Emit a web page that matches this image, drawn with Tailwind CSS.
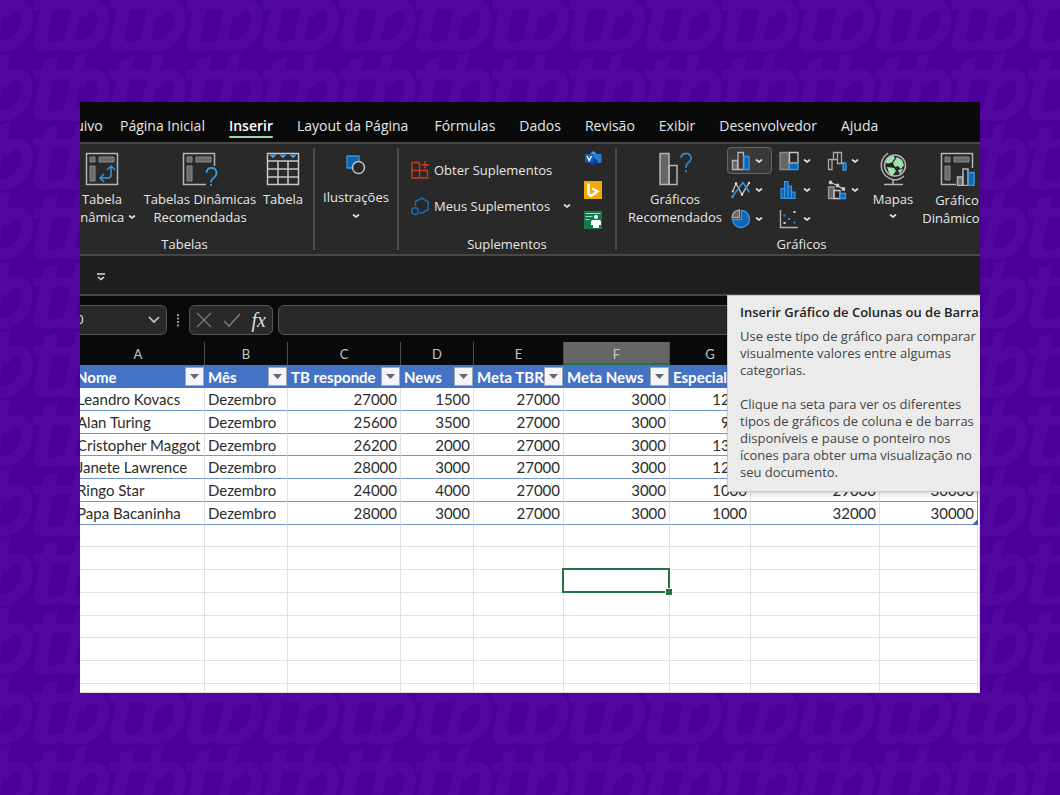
<!DOCTYPE html>
<html lang="pt-BR">
<head>
<meta charset="utf-8">
<title>Planilha</title>
<script src="https://cdn.jsdelivr.net/npm/@tailwindcss/browser@4"></script>
</head>
<body class="relative min-h-screen bg-[#4b009c] font-['Open_Sans',sans-serif]">
<!-- brand texture -->
<svg class="absolute inset-0 size-full" aria-hidden="true">
  <defs>
    <pattern id="brand" x="33" y="51.8" width="76.55" height="69.25" patternUnits="userSpaceOnUse">
      <g fill="none" stroke="#52089e" stroke-width="11.5">
        <path d="M0 22.500H42" stroke-width="9.500"/>
        <path d="M11 8.500L25 4.500L15 52Q14 60 19 60L36 57L32 67L12 69Q-1 69 0.500 58Z" fill="#52089e" stroke="none"/>
        <path d="M43 4L54.500 0.500L41 60L30 62Z" fill="#52089e" stroke="none"/>
        <path d="M46 33C50 26 55 22.500 60 22.500C68 22.500 70.500 29 70.500 36C70.500 50 60 63.500 46 63.500L30 62"/>
      </g>
    </pattern>
  </defs>
  <rect width="100%" height="100%" fill="url(#brand)"/>
</svg>

<main class="relative px-20 pt-[102px] pb-[102px]">
<div class="relative overflow-hidden bg-[#0a0a0a] text-[#e6e6e6]">

  <!-- ribbon tabs -->
  <nav class="flex h-10 items-center gap-6 border-0 text-sm whitespace-nowrap pt-2">
    <a href="#" class="-ml-7 w-[49px] text-right">Arquivo</a>
    <a href="#" class="-ml-[5px]">Página Inicial</a>
    <a href="#" class="relative font-semibold text-white">Inserir<span class="absolute inset-x-0 -bottom-[2px] h-[2px] rounded bg-[#9fd8b8]"></span></a>
    <a href="#" class="mr-[2px]">Layout da Página</a>
    <a href="#">Fórmulas</a>
    <a href="#">Dados</a>
    <a href="#">Revisão</a>
    <a href="#">Exibir</a>
    <a href="#">Desenvolvedor</a>
    <a href="#">Ajuda</a>
  </nav>

  <!-- ribbon -->
  <div class="flex h-[114px] overflow-hidden border-y-2 border-[#474747] bg-[#292929] py-1 text-[13px] leading-[18px] whitespace-nowrap">
    <section class="-ml-6 flex w-[259px] shrink-0 flex-col justify-between border-r-2 border-[#4d4d4d]">
      <div class="flex items-start pt-1 pl-[8px]">
        <button class="flex w-[76px] flex-col items-center">
          <svg class="mb-1 size-[34px]" viewBox="0 0 34 34" fill="none" stroke="#b5b5b5" stroke-width="1.500"><path d="M1.500 1.500h31v31h-31z"/><path d="M5 5h5v5H5zM14 5h15v5H14zM5 14h5v15H5z" fill="#6b6b6b" stroke="#8a8a8a" stroke-width="1"/><path d="M26 15v8q0 3-3 3h-8m4-4l-4 4 4 4M22 18l4-4 4 4" stroke="#3a96dd"/></svg>
          <span>Tabela</span>
          <span class="flex items-center gap-1">Dinâmica<svg class="h-1 w-2" viewBox="0 0 8 4" fill="none" stroke="#ddd" stroke-width="1.700"><path d="M1 .5L4 3 7 .5"/></svg></span>
        </button>
        <button class="flex w-[120px] flex-col items-center">
          <svg class="mb-1 h-[34px] w-[36px]" viewBox="0 0 36 34" fill="none" stroke="#b5b5b5" stroke-width="1.500"><path d="M32.500 14V1.500h-31v31H24"/><path d="M5 5h5v5H5zM14 5h15v5H14zM5 14h5v15H5z" fill="#6b6b6b" stroke="#8a8a8a" stroke-width="1"/><path d="M24.500 21q0-5 5-5 5 0 5 5 0 3-3 5-2.500 1.500-2.500 4.500M29 32v2" stroke="#3a96dd" stroke-width="1.800"/></svg>
          <span>Tabelas Dinâmicas</span><span>Recomendadas</span>
        </button>
        <button class="flex w-[46px] flex-col items-center">
          <svg class="mb-1 size-[34px]" viewBox="0 0 34 34" fill="none" stroke="#c8c8c8" stroke-width="1.500"><path d="M1.500 1.500h31v31h-31zM1.500 9h31M1.500 17h31M1.500 25h31M12 9v23.500M22 9v23.500"/><path d="M4 3h6l-3 3zM14 3h6l-3 3zM24 3h6l-3 3z" fill="#3a96dd" stroke="#3a96dd" stroke-width="1"/></svg>
          <span>Tabela</span>
        </button>
      </div>
      <h2 class="-mb-[3px] text-center">Tabelas</h2>
    </section>
    <section class="w-[84px] shrink-0 border-r-2 border-[#4d4d4d]">
      <button class="flex w-full flex-col items-center pt-1">
        <svg class="mb-2 h-7 w-6" viewBox="0 0 24 28" fill="none"><path d="M3 4h12v12H3z" fill="#0f64b4" stroke="#3a96dd" stroke-width="1.300"/><circle cx="14.500" cy="15.500" r="6" fill="#292929" stroke="#c0c0c0" stroke-width="1.500"/></svg>
        <span>Ilustrações</span>
        <svg class="mt-2 h-1 w-2" viewBox="0 0 8 4" fill="none" stroke="#ddd" stroke-width="1.700"><path d="M1 .5L4 3 7 .5"/></svg>
      </button>
    </section>
    <section class="flex w-[218px] shrink-0 flex-col justify-between border-r-2 border-[#4d4d4d]">
      <div class="flex gap-[13px] pl-3">
        <div class="flex w-[160px] flex-col gap-[18px] pt-[13px]">
          <button class="flex items-center gap-[5px]">
            <svg class="size-[18px]" viewBox="0 0 18 18" fill="none" stroke="#c43e1c" stroke-width="1.400"><path d="M8.500 1.500H1V17h15.500V9.500H1M8.500 1.500V17M14 0v7.500M10.500 3.700H18"/></svg>Obter Suplementos</button>
          <button class="flex items-center gap-[5px]">
            <svg class="size-[18px]" viewBox="0 0 18 18" fill="none" stroke="#1b6db8" stroke-width="1.500"><circle cx="4" cy="14" r="3.300"/><path d="M4.500 9V4.500L11 1l6.200 3.800v7.500L11 16H8.500"/></svg>Meus Suplementos
            <svg class="ml-auto h-1 w-2" viewBox="0 0 8 4" fill="none" stroke="#ddd" stroke-width="1.700"><path d="M1 .5L4 3 7 .5"/></svg></button>
        </div>
        <div class="flex flex-col gap-3 pt-[3px]">
          <button aria-label="Visio"><svg class="block size-[18px]" viewBox="0 0 18 18"><path d="M9.500 0l4.500 4-4.500 4L5 4z" fill="#41a5ee"/><path d="M9 3h8.500v9H9z" fill="#2b7cd3"/><path d="M9 6l5.500 4.500L9 15l-5-4z" fill="#103f91"/><path d="M1 3h8.500v8.500H1z" fill="#185abd"/><path d="M3 5l2.200 4.500L7.500 5" fill="none" stroke="#fff" stroke-width="1.300"/></svg></button>
          <button aria-label="Bing Maps"><svg class="block size-[18px]" viewBox="0 0 18 18"><path d="M0 0h18v18H0z" fill="#f2a900"/><path d="M4.500 2.500v10.500l2.500 2 6.500-4.500L8 7.500" fill="none" stroke="#fff" stroke-width="2.500"/></svg></button>
          <button aria-label="People Graph"><svg class="block size-[18px]" viewBox="0 0 18 18"><path d="M0 0h18v18H0z" fill="#107c4a"/><path d="M1.500 2.500h15M1.500 5.500h7M1.500 8.500h4" stroke="#9fd8b8" stroke-width="1.200"/><circle cx="12" cy="6" r="2" fill="#fff"/><path d="M7 11q0-2 2-2h6q2 0 2 2v3h-2v3H9v-3H7z" fill="#fff"/></svg></button>
        </div>
      </div>
      <h2 class="-mb-[3px] text-center">Suplementos</h2>
    </section>
    <section class="flex w-[369px] shrink-0 flex-col justify-between">
      <div class="flex items-start">
        <button class="flex w-[111px] shrink-0 flex-col items-center pt-1 pl-[5px]">
          <svg class="mb-1 h-[34px] w-[36px]" viewBox="0 0 36 34" fill="none" stroke="#b5b5b5" stroke-width="1.500"><path d="M3 1.500h9v31H3z" fill="#666"/><path d="M12 13.500h8v19h-8z"/><path d="M24 6q.5-4.500 5-4.500T34 6q0 3-3 5-2 1.500-2 5M29 18v2.500" stroke="#2f82c4" stroke-width="1.800"/></svg>
          <span>Gráficos</span><span>Recomendados</span>
        </button>
        <div class="grid shrink-0 grid-cols-[48px_48px_40px] gap-y-[3px]">
          <button aria-label="Colunas" class="-mt-[1px] -ml-px flex h-[27px] w-[45px] items-center gap-1 rounded border border-[#666] bg-[#3a3a3a] pl-[3px]"><svg class="size-5" viewBox="0 0 20 20" fill="none" stroke="#b5b5b5" stroke-width="1.300"><path d="M1.500 9.500h5v9h-5z" fill="#666"/><path d="M7 1.500h5.500v17H7z"/><path d="M13 5.500h5v13h-5z" fill="#0f64b4" stroke="#3a96dd"/></svg><svg class="h-1 w-2" viewBox="0 0 8 4" fill="none" stroke="#ddd" stroke-width="1.700"><path d="M1 .5L4 3 7 .5"/></svg></button>
          <button aria-label="Hierarquia" class="flex h-[26px] items-center gap-1 pl-[3px]"><svg class="size-5" viewBox="0 0 20 20" stroke-width="1.300"><path d="M1 1.500h9v17H1z" fill="#666" stroke="#8a8a8a"/><path d="M10.500 1.500H19V12h-8.500z" fill="none" stroke="#c8c8c8"/><path d="M10.500 12.500H19v6h-8.500z" fill="#0f64b4" stroke="#3a96dd"/></svg><svg class="h-1 w-2" viewBox="0 0 8 4" fill="none" stroke="#ddd" stroke-width="1.700"><path d="M1 .5L4 3 7 .5"/></svg></button>
          <button aria-label="Cascata" class="flex h-[26px] items-center gap-1 pl-[3px]"><svg class="size-5" viewBox="0 0 20 20" fill="none" stroke="#a8a8a8" stroke-width="1.300"><path d="M1.500 19V8.500h3.500V18.500h-3.500M5 8.500h1.500v-7h4v7h-4M10.500 1.500h4v11h-4z"/><path d="M16 12h3v7h-3z" fill="#0f64b4" stroke="#3a96dd"/><path d="M14.500 12h2"/></svg><svg class="h-1 w-2" viewBox="0 0 8 4" fill="none" stroke="#ddd" stroke-width="1.700"><path d="M1 .5L4 3 7 .5"/></svg></button>
          <button aria-label="Linhas" class="flex h-[26px] items-center gap-1 pl-[3px]"><svg class="size-5" viewBox="0 0 20 20" fill="none" stroke-width="1.500"><path d="M1.500 12L5 3.500 11 14.500 18 3" stroke="#b5b5b5"/><path d="M1 17L12 2.500l6.500 10" stroke="#3a96dd"/><g fill="#ddd"><circle cx="5" cy="3.500" r="1.200"/><circle cx="11" cy="14.500" r="1.200"/><circle cx="18" cy="3" r="1.200"/><circle cx="1.800" cy="11.500" r="1"/></g><circle cx="1.500" cy="16.800" r="1.300" fill="#3a96dd"/></svg><svg class="h-1 w-2" viewBox="0 0 8 4" fill="none" stroke="#ddd" stroke-width="1.700"><path d="M1 .5L4 3 7 .5"/></svg></button>
          <button aria-label="Estatística" class="flex h-[26px] items-center gap-1 pl-[3px]"><svg class="size-5" viewBox="0 0 20 20" fill="#0f64b4" stroke="#3a96dd" stroke-width="1.200"><path d="M2 8.500h3.500v10H2zM5.500 1.500H9v17H5.500zM9 6h3.500v12.500H9zM12.500 12H16v6.500h-3.500z"/></svg><svg class="h-1 w-2" viewBox="0 0 8 4" fill="none" stroke="#ddd" stroke-width="1.700"><path d="M1 .5L4 3 7 .5"/></svg></button>
          <button aria-label="Combinação" class="flex h-[26px] items-center gap-1 pl-[3px]"><svg class="size-5" viewBox="0 0 20 20" fill="none" stroke="#c8c8c8" stroke-width="1.300"><path d="M1.500 7h5.500v11.500H1.500z" fill="#666" stroke="#999"/><path d="M7 10.500h6v8H7z"/><path d="M13 13.500h5.500v5H13z" fill="#0f64b4" stroke="#3a96dd"/><path d="M3.500 2.500l7 3 6 4"/><path d="M2.500 1.500h2v2h-2zM9.500 4.500h2v2h-2zM15.500 8h2v2h-2z" fill="#fff"/></svg><svg class="h-1 w-2" viewBox="0 0 8 4" fill="none" stroke="#ddd" stroke-width="1.700"><path d="M1 .5L4 3 7 .5"/></svg></button>
          <button aria-label="Pizza" class="flex h-[26px] items-center gap-1 pl-[3px]"><svg class="size-5" viewBox="0 0 20 20" stroke-width="1.300"><path d="M10.500 1.500A8.500 8.500 0 1 1 1.500 10.500H10.500z" fill="#0f64b4" stroke="#3a96dd"/><path d="M8.500 1v7.500H1Q1.500 2 8.500 1z" fill="#666" stroke="#a8a8a8"/></svg><svg class="h-1 w-2" viewBox="0 0 8 4" fill="none" stroke="#ddd" stroke-width="1.700"><path d="M1 .5L4 3 7 .5"/></svg></button>
          <button aria-label="Dispersão" class="flex h-[26px] items-center gap-1 pl-[3px]"><svg class="size-5" viewBox="0 0 20 20" fill="none"><path d="M1.500 1v17.500H19" stroke="#b5b5b5" stroke-width="1.400"/><path d="M4.500 5.500h2v2h-2zM9 9h2v2H9zM14.500 12.500h2v2h-2z" fill="#2b88d8"/><path d="M14.500 2h2v2h-2zM4.500 13h2v2h-2z" fill="#ddd"/></svg><svg class="h-1 w-2" viewBox="0 0 8 4" fill="none" stroke="#ddd" stroke-width="1.700"><path d="M1 .5L4 3 7 .5"/></svg></button>
        </div>
        <button class="flex w-[56px] shrink-0 flex-col items-center pt-1 pl-[2px]">
          <svg class="mb-1 h-[34px] w-[28px]" viewBox="0 0 28 34" fill="none" stroke="#b5b5b5" stroke-width="1.500"><circle cx="16" cy="13.500" r="10.500"/><path d="M9 6l5-2.500 2 2-3 5-4 1-3-1zM18 5l5 3 2 5-3 4-3-3-3 1-2-4zM8 15l7 1 2 3-4 5-3-3zM19 18l5-1-3 5z" fill="#9fe0ae" stroke="none"/><path d="M9 1Q1 7 2.500 16T15 28q6 0 10-4M14 28v4.500M5 32.500h19"/></svg>
          <span>Mapas</span>
          <svg class="mt-[6px] h-1 w-2" viewBox="0 0 8 4" fill="none" stroke="#ddd" stroke-width="1.700"><path d="M1 .5L4 3 7 .5"/></svg>
        </button>
        <button class="-ml-[6px] flex w-[86px] shrink-0 flex-col items-center pt-1">
          <svg class="mb-[5px] h-[34px] w-[35px]" viewBox="0 0 35 34" fill="none" stroke="#b5b5b5" stroke-width="1.500"><path d="M32.500 16V1.500h-31v31H16"/><path d="M5 5h5v5H5zM14 5h15v5H14zM5 14h5v14H5z" fill="#6b6b6b" stroke="#8a8a8a" stroke-width="1"/><path d="M17.500 25h5v8.500h-5z" fill="#666"/><path d="M23 17h5v16.500h-5z"/><path d="M28.500 20.500h5.500v13h-5.500z" fill="#0f64b4" stroke="#3a96dd"/></svg>
          <span>Gráfico</span><span class="flex items-center gap-1">Dinâmico<svg class="h-1 w-2" viewBox="0 0 8 4" fill="none" stroke="#ddd" stroke-width="1.700"><path d="M1 .5L4 3 7 .5"/></svg></span>
        </button>
      </div>
      <h2 class="-mb-[3px] text-center">Gráficos</h2>
    </section>
  </div>

  <!-- quick access strip -->
  <div class="flex h-10 items-center border-b-2 border-[#474747] bg-[#1f1f1f] pt-[3px] pl-4">
    <button aria-label="Personalizar"><svg class="block h-2 w-[10px]" viewBox="0 0 10 8" fill="none" stroke="#ddd" stroke-width="1.500"><path d="M1 1h8M2 4l3 2.500L8 4"/></svg></button>
  </div>

  <!-- formula bar -->
  <div class="flex h-[46px] items-center gap-[6px] pt-[1px]">
    <div class="-ml-2 flex h-[30px] w-[95px] items-center rounded-md border border-[#555] bg-[#292929]">
      <input aria-label="Caixa de nome" value="F10" class="-ml-[11px] w-[80px] bg-transparent text-[13px] outline-none">
      <svg class="ml-auto mr-[5px] h-[8px] w-[14px]" viewBox="0 0 14 8" fill="none" stroke="#c8c8c8" stroke-width="1.700"><path d="M2 1l5 5 5-5"/></svg>
    </div>
    <svg class="mx-[3px] h-[14px] w-[4px]" viewBox="0 0 4 14" fill="#999"><path d="M1 1h2v2H1zM1 4.500h2v2H1zM1 8h2v2H1zM1 11.500h2v2H1z"/></svg>
    <div class="flex h-[30px] w-[84px] items-center justify-between rounded-md border border-[#555] bg-[#292929] px-[6px]">
      <button aria-label="Cancelar"><svg class="block h-4 w-4" viewBox="0 0 16 16" fill="none" stroke="#777" stroke-width="1.400"><path d="M1 1l14 14M15 1L1 15"/></svg></button>
      <button aria-label="Inserir valor"><svg class="block h-4 w-[18px]" viewBox="0 0 18 16" fill="none" stroke="#777" stroke-width="1.600"><path d="M1 9l5 5L17 2"/></svg></button>
      <button class="font-['Liberation_Serif',serif] text-[20px] leading-5 text-[#ddd] italic">fx</button>
    </div>
    <input aria-label="Barra de fórmulas" class="-ml-[1px] h-[30px] min-w-0 flex-1 rounded-md border border-[#555] bg-[#292929] outline-none">
  </div>

  <!-- sheet -->
  <table class="w-full table-fixed border-separate border-spacing-0 bg-white font-['Lato',sans-serif] text-[15px] leading-5 whitespace-nowrap text-[#2b2b2b]">
    <colgroup><col class="w-[125px]"><col class="w-[83px]"><col class="w-[113px]"><col class="w-[73px]"><col class="w-[90px]"><col class="w-[106px]"><col class="w-[81px]"><col class="w-[129px]"><col class="w-[98px]"><col></colgroup>
    <thead>
      <tr class="h-[23px] bg-[#0a0a0a] text-[13px] text-[#c4c4c4] [&>th]:border-r [&>th]:border-[#4d4d4d] [&>th]:p-0 [&>th]:font-normal">
        <th><div class="pr-2">A</div></th><th>B</th><th>C</th><th>D</th><th>E</th><th class="bg-[#666] shadow-[inset_0_-2px_0_#217346]">F</th><th>G</th><th></th><th></th><th></th>
      </tr>
      <tr class="h-[23px] bg-[#4472c4] text-left text-white [&>th]:p-0 [&>th>div]:flex [&>th>div]:h-[22px] [&>th>div]:items-center [&>th>div]:justify-between [&>th>div]:pl-[3px] [&_button]:mr-px [&_button]:grid [&_button]:size-[19px] [&_button]:shrink-0 [&_button]:place-items-center [&_button]:border [&_button]:border-[#a6a6a6] [&_button]:bg-[#f4f5f8]">
        <th><div><span class="-ml-[7px]">Nome</span><button aria-label="Filtrar Nome"><svg class="h-[5px] w-[9px]" viewBox="0 0 9 5"><path d="M0 0h9L4.500 5z" fill="#666"/></svg></button></div></th>
        <th><div>Mês<button aria-label="Filtrar Mês"><svg class="h-[5px] w-[9px]" viewBox="0 0 9 5"><path d="M0 0h9L4.500 5z" fill="#666"/></svg></button></div></th>
        <th><div>TB responde<button aria-label="Filtrar TB responde"><svg class="h-[5px] w-[9px]" viewBox="0 0 9 5"><path d="M0 0h9L4.500 5z" fill="#666"/></svg></button></div></th>
        <th><div>News<button aria-label="Filtrar News"><svg class="h-[5px] w-[9px]" viewBox="0 0 9 5"><path d="M0 0h9L4.500 5z" fill="#666"/></svg></button></div></th>
        <th><div>Meta TBR<button aria-label="Filtrar Meta TBR"><svg class="h-[5px] w-[9px]" viewBox="0 0 9 5"><path d="M0 0h9L4.500 5z" fill="#666"/></svg></button></div></th>
        <th><div>Meta News<button aria-label="Filtrar Meta News"><svg class="h-[5px] w-[9px]" viewBox="0 0 9 5"><path d="M0 0h9L4.500 5z" fill="#666"/></svg></button></div></th>
        <th><div>Especial</div></th><th></th><th></th><th class="bg-white"></th>
      </tr>
    </thead>
    <tbody class="[&>tr]:h-[23px] [&>tr:nth-child(4n+3)]:h-[22px] [&>tr:last-child]:h-[9px] [&_td]:border-r [&_td]:border-b [&_td]:border-[#e1e1e1] [&_td]:p-0 [&_td]:px-[3px] [&_td]:leading-5 [&>tr:nth-child(-n+6)>td:not(:last-child)]:border-b-[#7395d6] [&_td:nth-child(n+3)]:text-right [&>tr:nth-child(-n+6)>td:nth-child(9)]:border-r-[#7395d6]">
      <tr><td class="-indent-[6px]">Leandro Kovacs</td><td>Dezembro</td><td>27000</td><td>1500</td><td>27000</td><td>3000</td><td>1200</td><td></td><td></td><td></td></tr>
      <tr><td class="-indent-[6px]">Alan Turing</td><td>Dezembro</td><td>25600</td><td>3500</td><td>27000</td><td>3000</td><td>900</td><td></td><td></td><td></td></tr>
      <tr><td class="-indent-[6px]">Cristopher Maggot</td><td>Dezembro</td><td>26200</td><td>2000</td><td>27000</td><td>3000</td><td>1300</td><td></td><td></td><td></td></tr>
      <tr><td class="-indent-[6px]">Janete Lawrence</td><td>Dezembro</td><td>28000</td><td>3000</td><td>27000</td><td>3000</td><td>1200</td><td></td><td></td><td></td></tr>
      <tr><td class="-indent-[6px]">Ringo Star</td><td>Dezembro</td><td>24000</td><td>4000</td><td>27000</td><td>3000</td><td>1000</td><td>29000</td><td>30000</td><td></td></tr>
      <tr><td class="-indent-[6px]">Papa Bacaninha</td><td>Dezembro</td><td>28000</td><td>3000</td><td>27000</td><td>3000</td><td>1000</td><td>32000</td><td class="relative">30000<span class="absolute -right-px -bottom-px size-[6px] bg-[#3b63b8] [clip-path:polygon(100%_0,100%_100%,0_100%)]"></span></td><td></td></tr>
      <tr><td></td><td></td><td></td><td></td><td></td><td></td><td></td><td></td><td></td><td></td></tr>
      <tr><td></td><td></td><td></td><td></td><td></td><td></td><td></td><td></td><td></td><td></td></tr>
      <tr><td></td><td></td><td></td><td></td><td></td><td class="relative"><span class="absolute -top-[2px] -right-px -bottom-px -left-[2px] border-2 border-[#217346]"></span><span class="absolute -right-[3px] -bottom-[3px] size-[7px] border-t border-l border-white bg-[#217346]"></span></td><td></td><td></td><td></td><td></td></tr>
      <tr><td></td><td></td><td></td><td></td><td></td><td></td><td></td><td></td><td></td><td></td></tr>
      <tr><td></td><td></td><td></td><td></td><td></td><td></td><td></td><td></td><td></td><td></td></tr>
      <tr><td></td><td></td><td></td><td></td><td></td><td></td><td></td><td></td><td></td><td></td></tr>
      <tr><td></td><td></td><td></td><td></td><td></td><td></td><td></td><td></td><td></td><td></td></tr>
      <tr><td></td><td></td><td></td><td></td><td></td><td></td><td></td><td></td><td></td><td></td></tr>
    </tbody>
  </table>

  <!-- tooltip -->
  <div role="tooltip" class="absolute top-[193px] left-[647px] w-[270px] border border-[#c8c8c8] bg-[#ebebeb] pt-2 pb-[10px] pl-3 text-[13px] leading-[17px] whitespace-nowrap text-[#444] shadow-md">
    <strong class="mb-[7px] block font-semibold text-[#222]">Inserir Gráfico de Colunas ou de Barras</strong>
    <p class="mb-[17px]">Use este tipo de gráfico para comparar<br>visualmente valores entre algumas<br>categorias.</p>
    <p>Clique na seta para ver os diferentes<br>tipos de gráficos de coluna e de barras<br>disponíveis e pause o ponteiro nos<br>ícones para obter uma visualização no<br>seu documento.</p>
  </div>
</div>
</main>
</body>
</html>
